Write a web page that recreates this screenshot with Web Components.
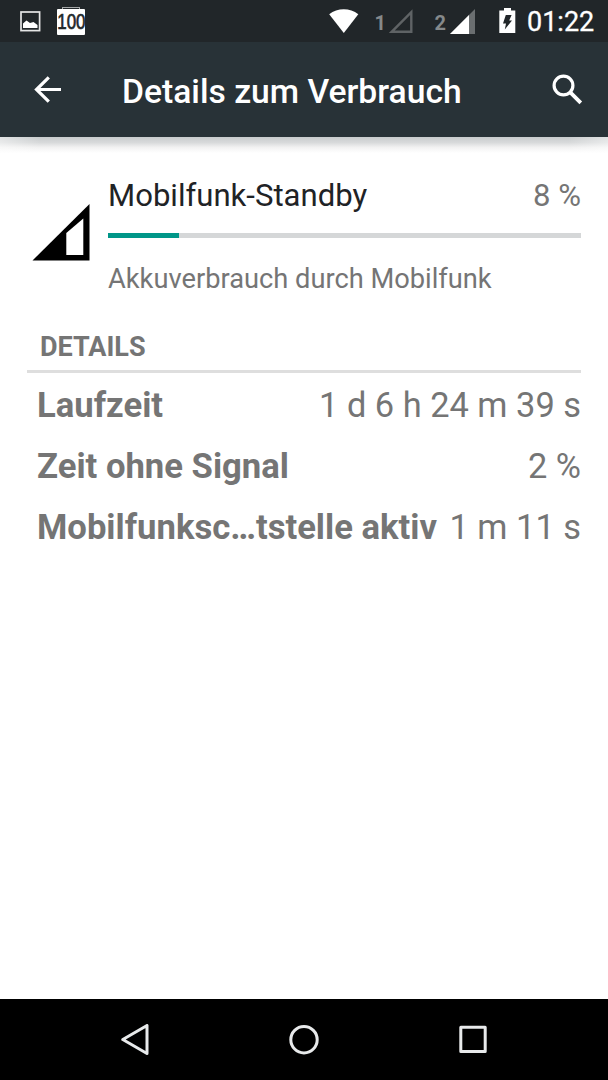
<!DOCTYPE html>
<html lang="de">
<head>
<meta charset="utf-8">
<title>Details zum Verbrauch</title>
<style>
    html, body { margin: 0; padding: 0; }
    body {
        width: 608px;
        height: 1080px;
        overflow: hidden;
        background: #fff;
        font-family: Roboto, "Noto Sans", sans-serif;
    }
</style>
</head>
<body>
<phone-screen>
    <status-bar slot="top" time="01:22"></status-bar>
    <app-bar slot="top">Details zum Verbrauch</app-bar>
    <usage-summary percent="8 %" level="15">
        Mobilfunk-Standby
        <span slot="note">Akkuverbrauch durch Mobilfunk</span>
    </usage-summary>
    <detail-list>
        <span slot="title">DETAILS</span>
        <detail-row value="1 d 6 h 24 m 39 s">Laufzeit</detail-row>
        <detail-row value="2 %">Zeit ohne Signal</detail-row>
        <detail-row value="1 m 11 s">Mobilfunksc…tstelle aktiv</detail-row>
    </detail-list>
    <nav-keys slot="bottom"></nav-keys>
</phone-screen>

<script>
// small helper, every element clones its own markup
function define(name, html, setup) {
    const template = document.createElement('template');
    template.innerHTML = html;
    customElements.define(name, class extends HTMLElement {
        constructor() {
            super();
            this.attachShadow({ mode: 'open' });
            this.shadowRoot.appendChild(template.content.cloneNode(true));
        }
        connectedCallback() {
            if (setup) setup(this, this.shadowRoot);
        }
    });
}

define('phone-screen', `
<style>
    :host { display: flex; flex-direction: column; height: 1080px; }
    main { flex: 1; background: #fff; }
</style>
<slot name="top"></slot>
<main><slot></slot></main>
<slot name="bottom"></slot>
`);

define('status-bar', `
<style>
    :host {
        display: flex;
        align-items: flex-start;
        height: 42px;
        background: #212629;
        color: #fff;
        box-sizing: border-box;
        padding: 0 14px 0 20px;
    }
    svg { display: block; flex: none; }
    .badge {
        margin: 7px 0 0 16px;
        width: 28px;
        height: 28px;
        display: grid;
        grid-template-columns: 28px;
        grid-template-rows: 2px 26px;
        justify-items: center;
    }
    .badge i { width: 16px; height: 1px; border: 1px solid #a5a8a9; border-bottom: 0; }
    .badge b {
        display: flex;
        justify-content: center;
        width: 28px;
        height: 26px;
        background: #fff;
        border-radius: 1px;
        color: #212629;
    }
    /* condensed digits so that all three fit into the badge */
    .badge span {
        flex: none;
        font: 400 22px/26px "Liberation Sans", sans-serif;
        -webkit-text-stroke: .7px #212629;
        transform: scaleX(.77);
        white-space: nowrap;
    }
    .gap { flex: 1; }
    .sim { font-size: 20px; font-weight: 700; line-height: 46px; color: #85898b; width: 15px; }
    .time { font-size: 27px; line-height: 45px; width: 67px; white-space: nowrap; margin-left: 11.5px; -webkit-text-stroke: .3px #fff; }
</style>
<svg width="21" height="21" viewBox="0 0 21 21" style="margin-top:11px">
    <rect x="1" y="1" width="18.6" height="18.6" fill="none" stroke="#e4e5e5" stroke-width="1.7"/>
    <path d="M3 17V12.5L6.5 9.5L10 12L13.5 11L17.5 14V17Z" fill="#fff"/>
</svg>
<div class="badge"><i></i><b><span>100</span></b></div>
<div class="gap"></div>
<svg width="30" height="25" viewBox="0 0 30 25" style="margin:9px 15.5px 0 0"><path d="M.2 5.2C8.5-1.5 21-1.5 29.3 5.2L14.8 24Z" fill="#fff"/></svg>
<span class="sim">1</span>
<svg width="25" height="25" viewBox="0 0 25 25" style="margin:9px 21px 0 -1px"><path d="M2.7 22.8H22.3V3.2Z" fill="none" stroke="#5f6365" stroke-width="2.4"/></svg>
<span class="sim">2</span>
<svg width="26" height="25" viewBox="0 0 26 25" style="margin:9px 23px 0 0"><path d="M0 25L25 0V25Z" fill="#6a6e70"/><path d="M0 25L19 6V25Z" fill="#fff"/></svg>
<svg width="17" height="25" viewBox="0 0 17 25" style="margin-top:8px">
    <path d="M5 0H12V2.6H16.3V25H.3V2.6H5Z" fill="#fff"/>
    <path d="M6.8 7H12.6L10.2 12.5H13L5.8 21.5L7 15.5H4Z" fill="#212629"/>
</svg>
<span class="time"></span>
`, (el, root) => {
    root.querySelector('.time').textContent = el.getAttribute('time');
});

define('app-bar', `
<style>
    :host {
        display: grid;
        grid-template-columns: 88px 1fr 32px;
        align-items: center;
        height: 95px;
        box-sizing: border-box;
        padding: 0 24px 0 34px;
        background: #283237;
        color: #fff;
        position: relative;
        z-index: 1;
    }
    /* shadow under the bar, thinner at both ends */
    :host::after {
        content: "";
        position: absolute;
        left: 0;
        right: 0;
        top: 100%;
        height: 16px;
        background:
            linear-gradient(90deg, rgba(255,255,255,.45), rgba(255,255,255,0) 40px, rgba(255,255,255,0) calc(100% - 40px), rgba(255,255,255,.45)),
            linear-gradient(#c8cccd, #d8dadb 35%, #f2f2f2 65%, #fff);
    }
    h1 { margin: 5px 0 0; font-size: 33.65px; font-weight: 500; line-height: 40px; white-space: nowrap; }
    svg { display: block; overflow: visible; }
</style>
<svg width="28" height="28" viewBox="0 0 28 28"><path d="M27 13.5H3M14.8 1.3L2.5 13.5L14.8 25.7" fill="none" stroke="#fff" stroke-width="3.2"/></svg>
<h1><slot></slot></h1>
<svg width="32" height="32" viewBox="0 0 32 32"><circle cx="11.5" cy="11.5" r="9.4" fill="none" stroke="#fff" stroke-width="3.2"/><path d="M18.3 18.3L28.8 28.8" stroke="#fff" stroke-width="3.8"/></svg>
`);

define('usage-summary', `
<style>
    :host { display: flex; padding: 38px 27px 0 32px; }
    svg { flex: none; margin: 29px 18px 0 0; }
    .body { flex: 1; }
    .head { display: flex; justify-content: space-between; height: 40px; font-size: 31.1px; line-height: 42px; color: #1f2326; white-space: nowrap; }
    .head .pct { color: #757575; }
    .bar { height: 5px; margin-top: 18px; background: #d5d7d8; }
    .bar div { height: 100%; background: #009688; }
    .note { margin-top: 23px; font-size: 27.25px; line-height: 36px; color: #757575; white-space: nowrap; }
</style>
<svg width="58" height="57" viewBox="0 0 58 57"><path d="M.5 56.5L57.5 0V56.5Z" fill="#000"/><path d="M34.3 29L51.3 14.5V51H34.3Z" fill="#fff"/></svg>
<div class="body">
    <div class="head"><span><slot></slot></span><span class="pct"></span></div>
    <div class="bar"><div></div></div>
    <div class="note"><slot name="note"></slot></div>
</div>
`, (el, root) => {
    root.querySelector('.pct').textContent = el.getAttribute('percent');
    root.querySelector('.bar div').style.width = el.getAttribute('level') + '%';
});

define('detail-list', `
<style>
    :host { display: block; padding: 30px 27px 0; }
    .title {
        height: 43px;
        padding-left: 13px;
        border-bottom: 3px solid #dedede;
        font-size: 27px;
        font-weight: 700;
        line-height: 41px;
        color: #757575;
    }
</style>
<div class="title"><slot name="title"></slot></div>
<slot></slot>
`);

define('detail-row', `
<style>
    :host {
        display: flex;
        justify-content: space-between;
        height: 60.8px;
        padding-left: 10px;
        font-size: 34.4px;
        line-height: 64px;
        color: #757575;
        white-space: nowrap;
    }
    b { font-weight: 700; font-size: 34.65px; }
</style>
<b><slot></slot></b><span class="value"></span>
`, (el, root) => {
    root.querySelector('.value').textContent = el.getAttribute('value');
});

define('nav-keys', `
<style>
    :host {
        display: flex;
        justify-content: space-between;
        align-items: center;
        height: 81px;
        box-sizing: border-box;
        padding: 0 120px;
        background: #000;
    }
    svg { fill: none; stroke: #e8eaeb; stroke-width: 3; stroke-linejoin: round; }
</style>
<svg width="32" height="32" viewBox="0 0 32 32"><path d="M27 1.5V29.5L2.8 15.5Z"/></svg>
<svg width="32" height="32" viewBox="0 0 32 32"><circle cx="16" cy="15.7" r="13.2"/></svg>
<svg width="32" height="32" viewBox="0 0 32 32"><rect x="4.8" y="3.2" width="24.4" height="24.4"/></svg>
`);
</script>
</body>
</html>
